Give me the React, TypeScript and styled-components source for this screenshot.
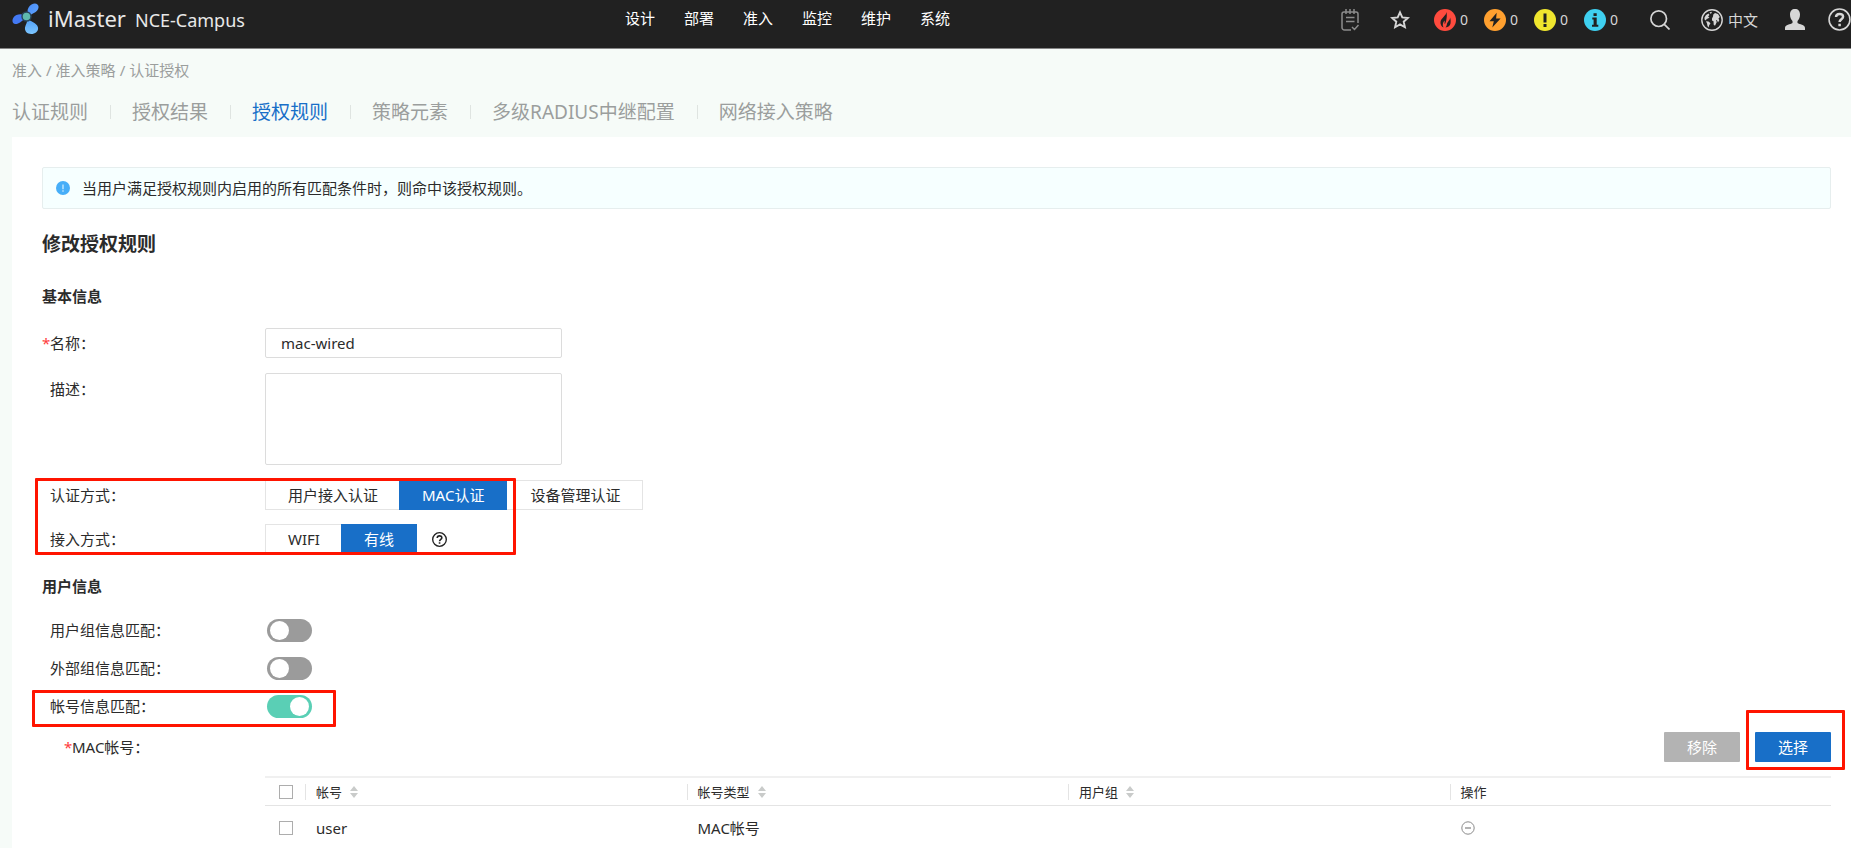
import React, { useState } from "react";
import styled, { createGlobalStyle, css } from "styled-components";

const color = {
  bar: "#212121",
  page: "#f6fbf8",
  blue: "#186fc8",
  text: "#2b2b2b",
  muted: "#9b9e9d",
  line: "#e4e4e4",
  red: "#ff1400",
};

const GlobalStyle = createGlobalStyle`
  *, *::before, *::after { box-sizing: border-box; }
  body { margin: 0; background: ${color.page}; }
  body, button, input, textarea {
    font-family: "Noto Sans", "Noto Sans CJK SC", sans-serif;
    font-size: 15px;
    line-height: 24px;
    color: ${color.text};
  }
  button { border: 0; padding: 0; background: none; cursor: pointer; }
  a { color: inherit; text-decoration: none; }
  svg { display: block; flex: none; }
`;

const Page = styled.div`
  min-height: 100vh;
  display: flex;
  flex-direction: column;
`;

const TopBar = styled.header`
  display: grid;
  grid-template-columns: 613px auto 1fr;
  align-items: start;
  height: 49px;
  padding: 0 0 0 12px;
  background: ${color.bar};
  border-bottom: 1px solid #858585;
  white-space: nowrap;
`;

const Brand = styled.a`
  display: flex;
  align-items: baseline;
  gap: 9px;
  color: #e8e8e8;
  height: 36px;
  line-height: 36px;
  font-size: 18px;

  svg { align-self: flex-start; margin-top: 3px; }
`;

const BrandName = styled.span`
  font-size: 22px;
`;

const MainNav = styled.nav`
  display: flex;
  gap: 29px;
  height: 36px;
  align-items: center;
  color: #fff;
`;

const Tools = styled.div`
  display: flex;
  justify-content: flex-end;
  align-items: center;
  height: 39px;
`;

const ToolButton = styled.button<{ $gap: number }>`
  display: flex;
  align-items: center;
  gap: 5px;
  margin-left: ${(p) => p.$gap}px;
  color: #d6d6d6;
`;

const AlarmButton = styled(ToolButton)`
  gap: 4px;
  width: 34px;
  font-size: 14px;
`;

const Crumbs = styled.nav`
  display: flex;
  gap: 4px;
  padding: 9px 12px 0;
  color: ${color.muted};
`;

const Tabs = styled.nav`
  display: flex;
  align-items: center;
  padding: 16px 12px 10px;
  line-height: 28px;
  font-size: 19px;
`;

const Tab = styled.a<{ $active?: boolean }>`
  color: ${(p) => (p.$active ? color.blue : color.muted)};

  &:not(:first-child) {
    display: flex;
    align-items: center;
  }
  &:not(:first-child)::before {
    content: "";
    width: 1px;
    height: 14px;
    margin: 0 21px 0 22px;
    background: #dfe4e1;
  }
`;

const Panel = styled.main`
  flex: 1;
  margin-left: 12px;
  margin-top: 1px;
  padding: 30px 20px 0 30px;
  background: #fff;
`;

const Notice = styled.p`
  display: flex;
  align-items: center;
  gap: 12px;
  height: 42px;
  margin: 0;
  padding: 0 13px;
  background: #f6ffff;
  border: 1px solid #e6eeee;
  border-radius: 2px;
`;

const Title = styled.h1`
  margin: 20px 0 0;
  font-size: 19px;
  line-height: 30px;
  font-weight: 700;
`;

const Section = styled.h2<{ $top: number }>`
  margin: ${(p) => p.$top}px 0 0;
  font-size: 15px;
  font-weight: 700;
`;

const Fields = styled.div`
  display: flex;
  flex-direction: column;
  gap: 15px;
  padding-top: 20px;
`;

const Marked = styled.div<{ $inline?: boolean }>`
  position: relative;
  ${(p) => p.$inline && css`align-self: flex-start;`}
`;

const Highlight = styled.span<{ $box: string; $width?: number }>`
  position: absolute;
  inset: ${(p) => p.$box};
  ${(p) => p.$width && css`width: ${p.$width}px;`}
  border: 3px solid ${color.red};
  border-radius: 1px;
  pointer-events: none;
`;

const Row = styled.div<{ $top?: boolean }>`
  display: grid;
  grid-template-columns: 223px minmax(0, 1fr);
  align-items: ${(p) => (p.$top ? "start" : "center")};
`;

const MethodRows = styled(Marked)`
  display: flex;
  flex-direction: column;
  gap: 14px;
`;

const Switches = styled.div`
  padding-top: 13px;
`;

const SwitchRow = styled(Row)`
  height: 38px;
`;

const labelStyle = css<{ $required?: boolean; $indent?: boolean; $drop?: boolean }>`
  display: flex;
  padding-left: ${(p) => (p.$required ? 0 : 8)}px;
  margin-left: ${(p) => (p.$indent ? 22 : 0)}px;
  margin-top: ${(p) => (p.$drop ? 4 : 0)}px;

  &::before {
    content: ${(p) => (p.$required ? '"*"' : "none")};
    width: 8px;
    color: #ff3b3b;
  }
`;

const Label = styled.label`${labelStyle}`;
const Caption = styled.span`${labelStyle}`;

const fieldStyle = css`
  width: 297px;
  padding: 0 15px;
  border: 1px solid #dcdcdc;
  border-radius: 2px;
  background: #fff;
  outline: none;
`;

const TextInput = styled.input`
  ${fieldStyle}
  height: 30px;
`;

const TextArea = styled.textarea`
  ${fieldStyle}
  display: block;
  height: 92px;
  resize: none;
`;

const Choices = styled.div`
  display: flex;
  align-items: center;
`;

const Choice = styled.label<{ $on: boolean }>`
  height: 30px;
  padding: 0 22px;
  line-height: 28px;
  border: 1px solid ${(p) => (p.$on ? color.blue : color.line)};
  background: ${(p) => (p.$on ? color.blue : "#fff")};
  color: ${(p) => (p.$on ? "#fff" : color.text)};
  cursor: pointer;

  &:first-child {
    padding: 0 21px 0 22px;
    border-right: 0;
  }
  &:not(:first-child) {
    padding-left: 23px;
    border-left: 0;
  }

  input {
    appearance: none;
    float: left;
    width: 0;
    height: 0;
    margin: 0;
  }
`;

const HelpButton = styled.button`
  margin-left: 15px;
`;

const Switch = styled.input`
  appearance: none;
  display: flex;
  width: 45px;
  height: 23px;
  margin: 0 0 0 2px;
  padding: 2px 3px;
  border-radius: 12px;
  background: #9b9b9b;
  cursor: pointer;

  &::before {
    content: "";
    width: 19px;
    height: 19px;
    border-radius: 50%;
    background: #fff;
  }
  &:checked {
    background: #5acfb5;
    justify-content: flex-end;
  }
`;

const Actions = styled.div`
  display: flex;
  justify-content: flex-end;
  gap: 15px;
`;

const ActionRow = styled(Row)`
  margin-top: 7px;
`;

const ActionButton = styled.button`
  width: 76px;
  height: 30px;
  border-radius: 1px;
  background: ${color.blue};
  color: #fff;

  &:disabled { background: #b3b3b3; cursor: default; }
`;

const TableArea = styled.div`
  padding: 14px 0 0 223px;
`;

const Accounts = styled.table`
  width: 100%;
  table-layout: fixed;
  border-collapse: separate;
  border-spacing: 0;
  text-align: left;
`;

const Head = styled.th<{ $width?: number }>`
  height: 30px;
  width: ${(p) => (p.$width ? `${p.$width}px` : "auto")};
  padding: 0;
  border-top: 2px solid #f0f0f0;
  border-bottom: 1px solid ${color.line};
  font-size: 13px;
  line-height: 16px;
  font-weight: 400;
`;

const HeadCell = styled.div`
  display: flex;
  align-items: center;
  gap: 8px;
  height: 16px;
  padding-left: 10px;
  border-left: 1px solid ${color.line};
`;

const Cell = styled.td`
  padding: 12px 11px 6px;
  line-height: 20px;
  vertical-align: middle;

  button { display: block; }
`;

const CheckCell = styled(Cell)`
  padding-left: 14px;
  padding-right: 0;
`;

const CheckHead = styled(Head)`
  padding-left: 14px;
`;

const Check = styled.input`
  appearance: none;
  display: block;
  width: 14px;
  height: 14px;
  margin: 0;
  border: 1px solid #adadad;
  background: #fff;

  &:checked { background: ${color.blue}; }
`;

const LogoIcon = () => (
  <svg width="27" height="31" viewBox="0 0 27 31" aria-hidden="true">
    <defs>
      <linearGradient id="blade" x1="0" y1="0" x2="1" y2="1">
        <stop offset="0" stopColor="#4a8df8" />
        <stop offset="1" stopColor="#5fa4ff" />
      </linearGradient>
      <linearGradient id="bladeLow" x1="0" y1="0" x2="0" y2="1">
        <stop offset="0" stopColor="#4f9df5" />
        <stop offset="1" stopColor="#7cc6ff" />
      </linearGradient>
    </defs>
    <path d="M17.500 12.500C14 9 15.500 4 19.500 1.500c3.500-2.300 7.500-.8 7 3C26 8.500 22.500 9.500 17.500 12.500z" fill="url(#blade)" />
    <path d="M12 12C8.500 10.500 3.500 11.500 1.500 14.500c-2 3-1 6.300 1.800 6.500C7 21.200 9 18.500 12 16.500z" fill="#4379f4" />
    <path d="M15.500 15.500c2 3 9.500 4 10.500 9 .7 4-3 6.500-6.800 6.500-4 0-6.700-2.800-6.200-6.500.5-3 2.500-5 2.500-9z" fill="url(#bladeLow)" />
    <circle cx="14.500" cy="13.500" r="4.500" fill="#5fb9ae" stroke="#27435a" strokeWidth="1.400" />
  </svg>
);

const TaskIcon = () => (
  <svg width="18" height="22" viewBox="0 0 18 22" fill="none" stroke="#8c8c8c" strokeWidth="1.500" aria-hidden="true">
    <path d="M10 21H3.500A2.500 2.500 0 0 1 1 18.500V5a2 2 0 0 1 2-2h12a2 2 0 0 1 2 2v9M5 0v5M9 0v5M13 0v5M5 8.500h8.500M5 12.500h8.500M11 18l2.500 2.500L17.500 16" />
  </svg>
);

const StarIcon = () => (
  <svg width="20" height="20" viewBox="0 0 20 20" fill="none" stroke="#d6d6d6" strokeWidth="1.900" aria-hidden="true">
    <path d="M10 2.300l2.300 5.100 5.500.6-4.100 3.700 1.200 5.500L10 14.400l-4.900 2.800 1.200-5.500L2.200 8l5.500-.6z" />
  </svg>
);

const alarmShape = {
  critical: (
    <path
      d="M12.500 3c-.5 4-5.500 6-6 10 -.3 2.600 1.200 4.700 3 5.500C8 15.500 9 13.500 10.500 11.500c.5 1-.2 2.600.3 3.800C12.500 12.500 13.300 7 12.500 3zM16 8.500c.3 2.800-3 4.400-3.200 7.200-.1 1-.7 2-1.300 2.800 2.800-.2 4.600-1.700 5-4 .3-2.300.2-4.300-.5-6z"
      fill={color.bar}
    />
  ),
  major: <path d="M12.700 3.800L5.500 12.300h4.300l-1.500 6.200 8.300-8.900h-4.500z" fill={color.bar} />,
  minor: <path d="M9.500 4.500h3v9h-3zM9.500 15h3v3h-3z" fill={color.bar} />,
  info: <path d="M9.500 4.300h3.200v2.700H9.500zM8.300 8.500h4.400v7.300h1.600v2H8v-2h1.600v-5.300H8.300z" fill={color.bar} />,
};

const AlarmIcon = ({ kind, fill }: { kind: keyof typeof alarmShape; fill: string }) => (
  <svg width="22" height="22" viewBox="0 0 22 22" aria-hidden="true">
    <circle cx="11" cy="11" r="11" fill={fill} />
    {alarmShape[kind]}
  </svg>
);

const SearchIcon = () => (
  <svg width="20" height="20" viewBox="0 0 20 20" fill="none" stroke="#d6d6d6" strokeWidth="1.700" aria-hidden="true">
    <circle cx="8.700" cy="8.700" r="7.800" />
    <path d="M14.300 14.300l5.200 5.200" />
  </svg>
);

const GlobeIcon = () => (
  <svg width="22" height="22" viewBox="0 0 22 22" aria-hidden="true">
    <circle cx="11" cy="11" r="10.200" fill="none" stroke="#d6d6d6" strokeWidth="1.400" />
    <path
      d="M3.500 8.500L5 6l2.500-1.500L8.500 6 7 7.500l1.500.7L7 9.500 5.500 10l-.5 1.500-1.500-1zM5 12.300l2.500.2 2 1.700-1.300 2L7.500 18.500 6.500 17 6 14.500zM8.500 3.500l2-.7.3 1.200-1.500.7zM11 9.500l1-2 .3-2L14 4l3 1 1.800 3-1.300 1.500.8 1.800-1.300 2.200-1.200-2.500-.8.5.8 1.500-1.800 3.700-1.300-1-.2-3.400L11 11.500z"
      fill="#d6d6d6"
    />
  </svg>
);

const UserIcon = () => (
  <svg width="20" height="21" viewBox="0 0 20 21" fill="#d6d6d6" aria-hidden="true">
    <path d="M10 0c3.200 0 5 2 5 5.500 0 3-1 5-2.500 6.500v2c2 1.500 7.500 1.500 7.500 5v2H0v-2c0-3.500 5.500-3.500 7.500-5v-2C6 10.500 5 8.500 5 5.500 5 2 6.800 0 10 0z" />
  </svg>
);

const QuestionIcon = ({ size, stroke }: { size: number; stroke: string }) => (
  <svg width={size} height={size} viewBox="0 0 22 22" fill="none" stroke={stroke} aria-hidden="true">
    <circle cx="11" cy="11" r="10" strokeWidth={size > 16 ? 1.5 : 2} />
    <path d="M7.700 8.700c0-4 6.700-4 6.700-.4 0 2.500-3.300 2.300-3.300 5.200M11.100 15v2.400" strokeWidth="2.400" />
  </svg>
);

const InfoIcon = () => (
  <svg width="14" height="14" viewBox="0 0 14 14" aria-hidden="true">
    <circle cx="7" cy="7" r="7" fill="#47aef8" />
    <path d="M7 3.500v4.700M7 9.300v1.400" stroke="#d8f0ff" strokeWidth="1.200" />
  </svg>
);

const SortIcon = () => (
  <svg width="8" height="12" viewBox="0 0 8 12" fill="#c9cbca" aria-hidden="true">
    <path d="M4 0l4 5H0zM4 12l4-5H0z" />
  </svg>
);

const RemoveIcon = () => (
  <svg width="14" height="14" viewBox="0 0 14 14" fill="none" stroke="#8a8a8a" aria-hidden="true">
    <circle cx="7" cy="7" r="6.200" />
    <path d="M4 7h6" strokeWidth="1.300" />
  </svg>
);

const navItems = ["设计", "部署", "准入", "监控", "维护", "系统"];
const tabs = ["认证规则", "授权结果", "授权规则", "策略元素", "多级RADIUS中继配置", "网络接入策略"];
const alarms: { kind: keyof typeof alarmShape; fill: string; label: string; gap: number }[] = [
  { kind: "critical", fill: "#ff4b3e", label: "紧急告警", gap: 24 },
  { kind: "major", fill: "#ffa02f", label: "重要告警", gap: 16 },
  { kind: "minor", fill: "#f0e62e", label: "次要告警", gap: 16 },
  { kind: "info", fill: "#3fd0f0", label: "提示告警", gap: 16 },
];

type ChoiceGroupProps = { name: string; options: string[]; value: string; onChange: (v: string) => void };

const ChoiceGroup = ({ name, options, value, onChange }: ChoiceGroupProps) => (
  <>
    {options.map((option) => (
      <Choice key={option} $on={option === value}>
        <input type="radio" name={name} checked={option === value} onChange={() => onChange(option)} />
        {option}
      </Choice>
    ))}
  </>
);

const SortableHead = ({ children }: { children: string }) => (
  <Head scope="col">
    <HeadCell>
      {children}
      <button type="button" aria-label={`${children}排序`}>
        <SortIcon />
      </button>
    </HeadCell>
  </Head>
);

export default function App() {
  const [auth, setAuth] = useState("MAC认证");
  const [access, setAccess] = useState("有线");

  return (
    <Page>
      <GlobalStyle />
      <TopBar>
        <Brand href="#">
          <LogoIcon />
          <BrandName>iMaster</BrandName>
          NCE-Campus
        </Brand>
        <MainNav>
          {navItems.map((item) => (
            <a key={item} href="#">{item}</a>
          ))}
        </MainNav>
        <Tools>
          <ToolButton $gap={0} aria-label="任务"><TaskIcon /></ToolButton>
          <ToolButton $gap={31} aria-label="收藏"><StarIcon /></ToolButton>
          {alarms.map((a) => (
            <AlarmButton key={a.kind} $gap={a.gap} aria-label={a.label}>
              <AlarmIcon kind={a.kind} fill={a.fill} />0
            </AlarmButton>
          ))}
          <ToolButton $gap={32} aria-label="搜索"><SearchIcon /></ToolButton>
          <ToolButton $gap={31}><GlobeIcon />中文</ToolButton>
          <ToolButton $gap={27} aria-label="用户"><UserIcon /></ToolButton>
          <ToolButton $gap={23} aria-label="帮助"><QuestionIcon size={23} stroke="#d6d6d6" /></ToolButton>
        </Tools>
      </TopBar>

      <Crumbs>
        <a href="#">准入</a>
        <span>/</span>
        <a href="#">准入策略</a>
        <span>/</span>
        <a href="#">认证授权</a>
      </Crumbs>
      <Tabs>
        {tabs.map((tab) => (
          <Tab key={tab} href="#" $active={tab === "授权规则"}>{tab}</Tab>
        ))}
      </Tabs>

      <Panel>
        <Notice>
          <InfoIcon />
          当用户满足授权规则内启用的所有匹配条件时，则命中该授权规则。
        </Notice>
        <Title>修改授权规则</Title>

        <Section $top={25}>基本信息</Section>
        <Fields>
          <Row>
            <Label htmlFor="rule-name" $required>名称：</Label>
            <TextInput id="rule-name" defaultValue="mac-wired" />
          </Row>
          <Row $top>
            <Label htmlFor="rule-desc" $drop>描述：</Label>
            <TextArea id="rule-desc" />
          </Row>
          <MethodRows>
            <Row>
              <Caption id="auth-label">认证方式：</Caption>
              <Choices role="radiogroup" aria-labelledby="auth-label">
                <ChoiceGroup name="auth" options={["用户接入认证", "MAC认证", "设备管理认证"]} value={auth} onChange={setAuth} />
              </Choices>
            </Row>
            <Row>
              <Caption id="access-label">接入方式：</Caption>
              <Choices role="radiogroup" aria-labelledby="access-label">
                <ChoiceGroup name="access" options={["WIFI", "有线"]} value={access} onChange={setAccess} />
                <HelpButton type="button" aria-label="接入方式说明">
                  <QuestionIcon size={15} stroke="#222222" />
                </HelpButton>
              </Choices>
            </Row>
            <Highlight $box="-2px auto -1px -7px" $width={481} />
          </MethodRows>
        </Fields>

        <Section $top={20}>用户信息</Section>
        <Switches>
          <SwitchRow>
            <Label htmlFor="match-group">用户组信息匹配：</Label>
            <Switch id="match-group" type="checkbox" role="switch" />
          </SwitchRow>
          <SwitchRow>
            <Label htmlFor="match-external">外部组信息匹配：</Label>
            <Switch id="match-external" type="checkbox" role="switch" />
          </SwitchRow>
          <Marked>
            <SwitchRow>
              <Label htmlFor="match-account">帐号信息匹配：</Label>
              <Switch id="match-account" type="checkbox" role="switch" defaultChecked />
            </SwitchRow>
            <Highlight $box="3px auto -2px -10px" $width={304} />
          </Marked>
        </Switches>

        <ActionRow>
          <Caption $required $indent>MAC帐号：</Caption>
          <Actions>
            <ActionButton type="button" disabled>移除</ActionButton>
            <Marked $inline>
              <ActionButton type="button">选择</ActionButton>
              <Highlight $box="-22px -14px -8px -9px" />
            </Marked>
          </Actions>
        </ActionRow>

        <TableArea>
          <Accounts>
            <thead>
              <tr>
                <CheckHead scope="col" $width={40}><Check type="checkbox" aria-label="全选" /></CheckHead>
                <SortableHead>帐号</SortableHead>
                <SortableHead>帐号类型</SortableHead>
                <SortableHead>用户组</SortableHead>
                <Head scope="col"><HeadCell>操作</HeadCell></Head>
              </tr>
            </thead>
            <tbody>
              <tr>
                <CheckCell><Check type="checkbox" aria-label="选择 user" /></CheckCell>
                <Cell>user</Cell>
                <Cell>MAC帐号</Cell>
                <Cell />
                <Cell>
                  <button type="button" aria-label="移除 user"><RemoveIcon /></button>
                </Cell>
              </tr>
            </tbody>
          </Accounts>
        </TableArea>
      </Panel>
    </Page>
  );
}
